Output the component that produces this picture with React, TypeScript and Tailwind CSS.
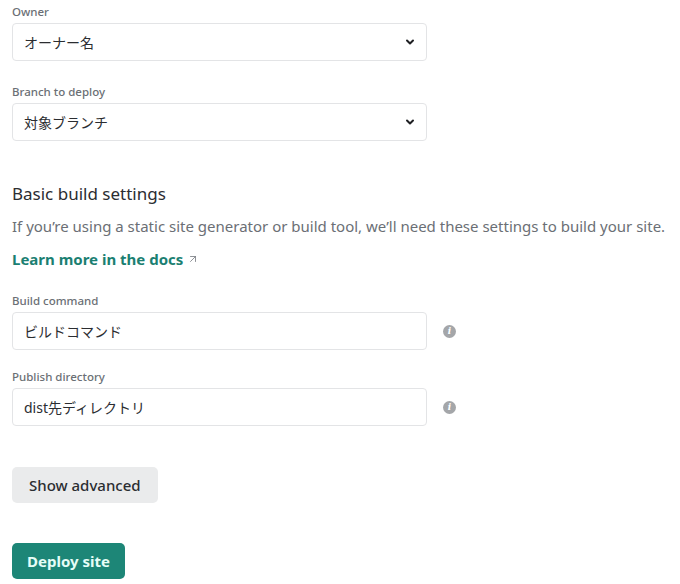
import { ChevronDown, ArrowUpRight } from "lucide-react"

const font = { fontFamily: '"Noto Sans", "Noto Sans CJK JP", sans-serif' }

function Label({ text }: { text: string }) {
  return (
    <label className="block h-[16px] text-[11.5px] leading-[16px] font-medium text-[#6b6f75] mb-[3px]">
      {text}
    </label>
  )
}

function Select({ value }: { value: string }) {
  return (
    <div className="flex items-center justify-between w-[415px] h-[38px] border border-[#e3e4e6] rounded-[4px] bg-white pl-[11px] pr-[10px]">
      <span className="text-[14px] text-[#2b2d31]">{value}</span>
      <ChevronDown size={12} strokeWidth={4} className="text-[#1f2023]" />
    </div>
  )
}

function InfoIcon() {
  return (
    <div className="w-[13px] h-[13px] rounded-full bg-[#a4a6a9] flex items-center justify-center">
      <span className="text-[9px] leading-none font-bold italic text-white" style={{ fontFamily: '"DejaVu Serif", serif' }}>
        i
      </span>
    </div>
  )
}

function TextField({ value }: { value: string }) {
  return (
    <div className="flex items-center">
      <div className="flex items-center w-[415px] h-[38px] border border-[#e3e4e6] rounded-[4px] bg-white pl-[11px]">
        <span className="text-[14px] text-[#2b2d31]">{value}</span>
      </div>
      <div className="ml-[16px]">
        <InfoIcon />
      </div>
    </div>
  )
}

export default function App() {
  return (
    <div className="w-[680px] h-[584px] bg-white px-[12px] pt-[4px] overflow-hidden" style={font}>
      <div className="mb-[23px]">
        <Label text="Owner" />
        <Select value="オーナー名" />
      </div>
      <div>
        <Label text="Branch to deploy" />
        <Select value="対象ブランチ" />
      </div>

      <h2 className="mt-[41px] text-[17px] leading-[24px] text-[#2b2d31]">Basic build settings</h2>
      <p className="mt-[9px] text-[15px] leading-[22px] text-[#6b6f75]">
        If you’re using a static site generator or build tool, we’ll need these settings to build your site.
      </p>
      <a className="mt-[11px] flex items-center gap-[4px] text-[15px] leading-[22px] font-bold text-[#1b7f72]">
        Learn more in the docs
        <ArrowUpRight size={12} strokeWidth={1.5} className="text-[#6b6f75]" />
      </a>

      <div className="mt-[23px] mb-[19px]">
        <Label text="Build command" />
        <TextField value="ビルドコマンド" />
      </div>
      <div>
        <Label text="Publish directory" />
        <TextField value="dist先ディレクトリ" />
      </div>

      <button className="mt-[41px] block h-[36px] px-[17px] rounded-[5px] bg-[#eaebec] text-[15px] font-medium text-[#2b2d31]">
        Show advanced
      </button>
      <button className="mt-[40px] block h-[36px] px-[15px] rounded-[5px] bg-[#1d8677] text-[15px] font-bold text-[#e6fdf7]">
        Deploy site
      </button>
    </div>
  )
}
